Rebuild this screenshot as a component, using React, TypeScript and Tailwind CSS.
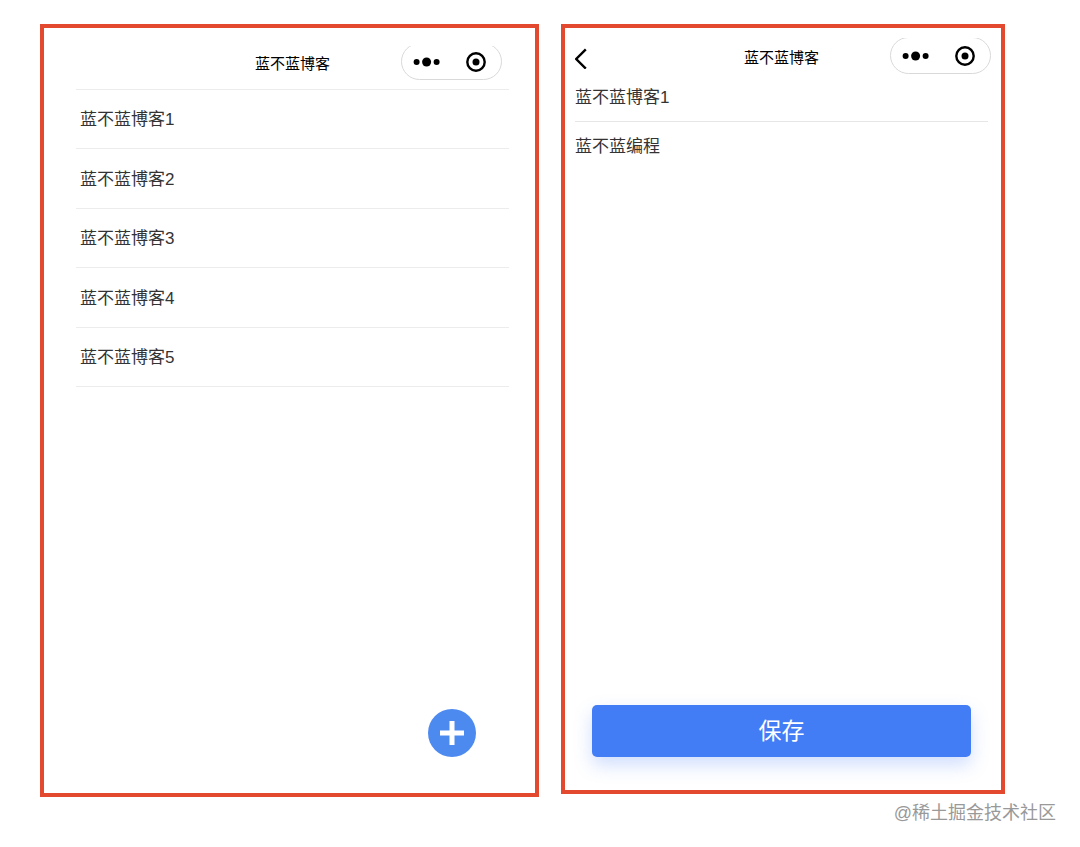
import { useState } from "react";

const notes = ["蓝不蓝博客1", "蓝不蓝博客2", "蓝不蓝博客3", "蓝不蓝博客4", "蓝不蓝博客5"];

function Capsule() {
  return (
    <div className="flex h-[37px] w-[101px] shrink-0 rounded-full border border-[#d9d9d9] text-black">
      <button type="button" aria-label="更多" className="flex flex-1 items-center justify-center">
        <svg width="28" height="10" viewBox="0 0 28 10" fill="currentColor" aria-hidden="true">
          <circle cx="3.6" cy="5" r="3" />
          <circle cx="13.6" cy="5" r="4.5" />
          <circle cx="23.6" cy="5" r="3" />
        </svg>
      </button>
      <button type="button" aria-label="关闭" className="flex flex-1 items-center justify-center">
        <svg width="20" height="20" viewBox="0 0 20 20" aria-hidden="true">
          <circle cx="10" cy="10" r="8.7" fill="none" stroke="currentColor" strokeWidth="2.4" />
          <circle cx="10" cy="10" r="3.5" fill="currentColor" />
        </svg>
      </button>
    </div>
  );
}

function ListScreen() {
  return (
    <section className="flex min-h-[773px] flex-col border-4 border-[#e2492f] pr-[26px] pl-8">
      <header className="grid grid-cols-[1fr_auto_1fr] items-end pt-[18px] pb-[9px]">
        <h1 className="col-start-2 text-[15px] leading-8 text-black">蓝不蓝博客</h1>
        <div className="mr-[7px] flex h-[34px] items-end justify-self-end overflow-hidden">
          <Capsule />
        </div>
      </header>
      <ul className="grid h-[298px] grid-rows-5 border-t border-[#ececec]">
        {notes.map((note) => (
          <li key={note} className="flex items-center border-b border-[#ececec] pt-0.5 pl-1 text-[17px] text-[#333]">
            {note}
          </li>
        ))}
      </ul>
      <button
        type="button"
        aria-label="新建"
        className="mt-auto mr-[33px] mb-9 flex size-12 items-center justify-center self-end rounded-full bg-[#4d8af0]"
      >
        <svg width="24" height="24" viewBox="0 0 24 24" fill="#fff" aria-hidden="true">
          <path d="M9.5 0h5v9.5H24v5h-9.5V24h-5v-9.5H0v-5h9.5z" />
        </svg>
      </button>
    </section>
  );
}

function EditScreen() {
  const [title, setTitle] = useState("蓝不蓝博客1");
  const [body, setBody] = useState("蓝不蓝编程");
  return (
    <section className="flex min-h-[770px] flex-col border-4 border-[#e2492f] pr-[13px] pl-[10px]">
      <header className="grid grid-cols-[1fr_auto_1fr] items-end pt-[10px]">
        <button type="button" aria-label="返回" className="flex h-8 w-6 items-center">
          <svg width="12" height="22" viewBox="0 0 12 22" fill="none" aria-hidden="true">
            <path d="M10.8 2.4L1.2 12l9.6 9.6" stroke="#000" strokeWidth="2.4" />
          </svg>
        </button>
        <h1 className="text-[15px] leading-8 text-black">蓝不蓝博客</h1>
        <div className="-mr-[3px] flex h-9 items-end justify-self-end overflow-hidden">
          <Capsule />
        </div>
      </header>
      <input
        aria-label="标题"
        value={title}
        onChange={(e) => setTitle(e.target.value)}
        className="h-12 w-full border-b border-[#e6e6e6] pb-1 text-[17px] text-[#333] outline-none"
      />
      <textarea
        aria-label="内容"
        value={body}
        onChange={(e) => setBody(e.target.value)}
        className="w-full flex-1 resize-none pt-[13px] text-[17px] leading-6 text-[#333] outline-none"
      />
      <button
        type="button"
        className="mt-4 mr-[17px] mb-[33px] ml-[17px] h-[52px] rounded-[5px] bg-[#427df6] text-[23px] text-white shadow-[0_8px_18px_rgba(66,125,246,0.25)]"
      >
        保存
      </button>
    </section>
  );
}

export default function App() {
  return (
    <div className="min-h-screen bg-white font-['Liberation_Sans','Noto_Sans_CJK_SC',sans-serif]">
      <main className="grid grid-cols-[499fr_444fr] items-start gap-[22px] pt-6 pr-[75px] pl-10">
        <ListScreen />
        <EditScreen />
      </main>
      <footer className="pt-1 pr-6 text-right text-[18px] leading-6 text-[#999]">@稀土掘金技术社区</footer>
    </div>
  );
}
